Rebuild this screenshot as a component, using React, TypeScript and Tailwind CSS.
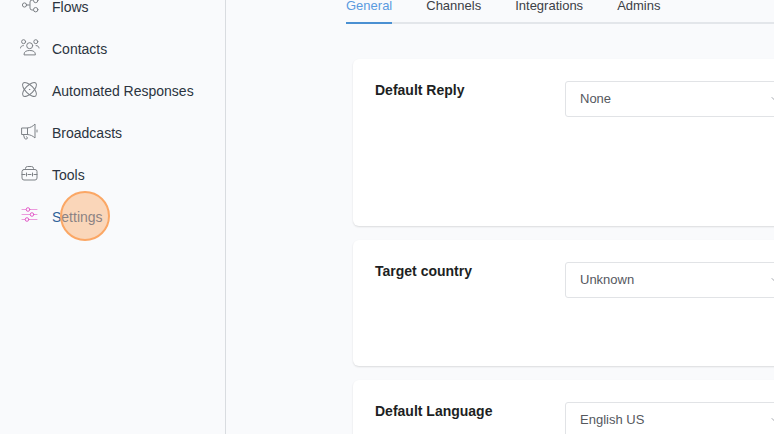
import { ReactNode } from "react";
import clsx from "clsx";
import { ChevronDown } from "lucide-react";

function Icon({ children }: { children: ReactNode }) {
  return (
    <svg
      viewBox="0 0 20 20"
      fill="none"
      stroke="currentColor"
      strokeLinecap="round"
      strokeLinejoin="round"
      className="size-5 shrink-0"
      aria-hidden="true"
    >
      {children}
    </svg>
  );
}

const navItems = [
  {
    label: "Flows",
    icon: (
      <Icon>
        <circle cx="4.5" cy="8" r="2.1" />
        <circle cx="15.7" cy="3.5" r="2.2" />
        <circle cx="15.7" cy="12.7" r="2.2" />
        <path d="M6.8 8h2.7M13.2 3h-1.2a2 2 0 0 0-2 2v6a2 2 0 0 0 2 2h1.2" />
      </Icon>
    ),
  },
  {
    label: "Contacts",
    icon: (
      <Icon>
        <circle cx="3.6" cy="2.7" r="2" />
        <circle cx="15.8" cy="2.7" r="2" />
        <circle cx="9.7" cy="6.7" r="3" />
        <path d="M4 15.5c0-3 2.2-4 5.7-4s5.7 1 5.7 4zM.5 9c.2-1.6 1-2.3 2.9-2.4M19 9c-.2-1.6-1-2.3-2.9-2.4" />
      </Icon>
    ),
  },
  {
    label: "Automated Responses",
    icon: (
      <Icon>
        <ellipse cx="9.5" cy="8.5" rx="9" ry="4" transform="rotate(45 9.5 8.5)" />
        <ellipse cx="9.5" cy="8.5" rx="9" ry="4" transform="rotate(-45 9.5 8.5)" />
        <circle cx="9.5" cy="8.5" r=".2" />
      </Icon>
    ),
  },
  {
    label: "Broadcasts",
    icon: (
      <Icon>
        <path d="M2 5h5.5v6.5H2zM7.5 5c3-.4 5.200-1.500 7.500-4v14c-2.300-2.200-4.500-3.200-7.500-3.500M3.500 11.500l1 3.800c.3 1 3 1 3-.3l-.9-1.300M17 7v2" />
      </Icon>
    ),
  },
  {
    label: "Tools",
    icon: (
      <Icon>
        <rect x="2" y="4.5" width="15" height="10.500" rx="2" />
        <path d="M5.5 4.5v-1a2 2 0 0 1 2-2h4a2 2 0 0 1 2 2v1M2 9.5h3M8 9.5h3M14 9.5h3M6.5 8v3M12.5 8v3" />
      </Icon>
    ),
  },
  {
    label: "Settings",
    active: true,
    icon: (
      <Icon>
        <path d="M2 2.5h4M10 2.5h7M2 7.5h8M14 7.5h3M2 12.5h3M9 12.5h8" opacity=".6" />
        <circle cx="8" cy="2.5" r="1.8" />
        <circle cx="12" cy="7.5" r="1.8" />
        <circle cx="7" cy="12.5" r="1.8" />
      </Icon>
    ),
  },
];

const tabs = ["General", "Channels", "Integrations", "Admins"];

const settings = [
  { id: "default-reply", label: "Default Reply", value: "None", height: "h-[167px]" },
  { id: "target-country", label: "Target country", value: "Unknown", height: "h-[126px]" },
  { id: "default-language", label: "Default Language", value: "English US", height: "h-[126px]" },
];

function Sidebar() {
  return (
    <aside className="w-[226px] shrink-0 border-r border-[#d9dce0]">
      <nav className="-mt-3.5">
        {navItems.map(({ label, icon, active }) => (
          <a
            key={label}
            href="#"
            className="flex h-[42px] items-center gap-3 pl-5 text-sm text-[#2b3440]"
          >
            <span className={active ? "text-[#e35bc8]" : "text-[#7d8186]"}>{icon}</span>
            <span className={clsx("relative", active && "text-[#2f6299]")}>
              {label}
              {active && (
                <span className="absolute -top-4 left-2 size-[50px] rounded-full border-2 border-[#fba765] bg-[#faaa68]/45" />
              )}
            </span>
          </a>
        ))}
      </nav>
    </aside>
  );
}

function SettingCard({ id, label, value, height }: (typeof settings)[number]) {
  return (
    <section className={clsx("flex rounded-md bg-white px-[22px] pt-[22px] shadow-[0_1px_2px_#00000020]", height)}>
      <label htmlFor={id} className="w-[190px] shrink-0 text-sm/[18px] font-bold text-[#1d1f23]">
        {label}
      </label>
      <div className="relative h-9 min-w-[220px] flex-1">
        <select
          id={id}
          className="size-full appearance-none rounded-[3px] border border-[#e1e3e6] bg-white px-3.5 text-[13px] text-[#55585e]"
        >
          <option>{value}</option>
        </select>
        <ChevronDown className="pointer-events-none absolute top-3 right-1 size-3 text-[#a6a9af]" />
      </div>
    </section>
  );
}

export default function App() {
  return (
    <div className="flex min-h-screen overflow-hidden bg-[#f9fafc] font-['Liberation_Sans',Arial,sans-serif]">
      <Sidebar />
      <main className="h-screen min-w-0 flex-1 overflow-hidden">
        <div className="ml-[120px] flex gap-[34px] border-b-2 border-[#e3e6ea]">
          {tabs.map((tab, i) => (
            <button
              key={tab}
              className={clsx(
                "-mb-0.5 h-6 border-b-2 pb-2.5 text-[13px]/3",
                i === 0 ? "border-[#4a90d2] text-[#5b9bdf]" : "border-transparent text-[#3c4046]",
              )}
            >
              {tab}
            </button>
          ))}
        </div>
        <div className="-mr-8 ml-[127px] flex flex-col gap-3.5 pt-[35px]">
          {settings.map((setting) => (
            <SettingCard key={setting.id} {...setting} />
          ))}
        </div>
      </main>
    </div>
  );
}
